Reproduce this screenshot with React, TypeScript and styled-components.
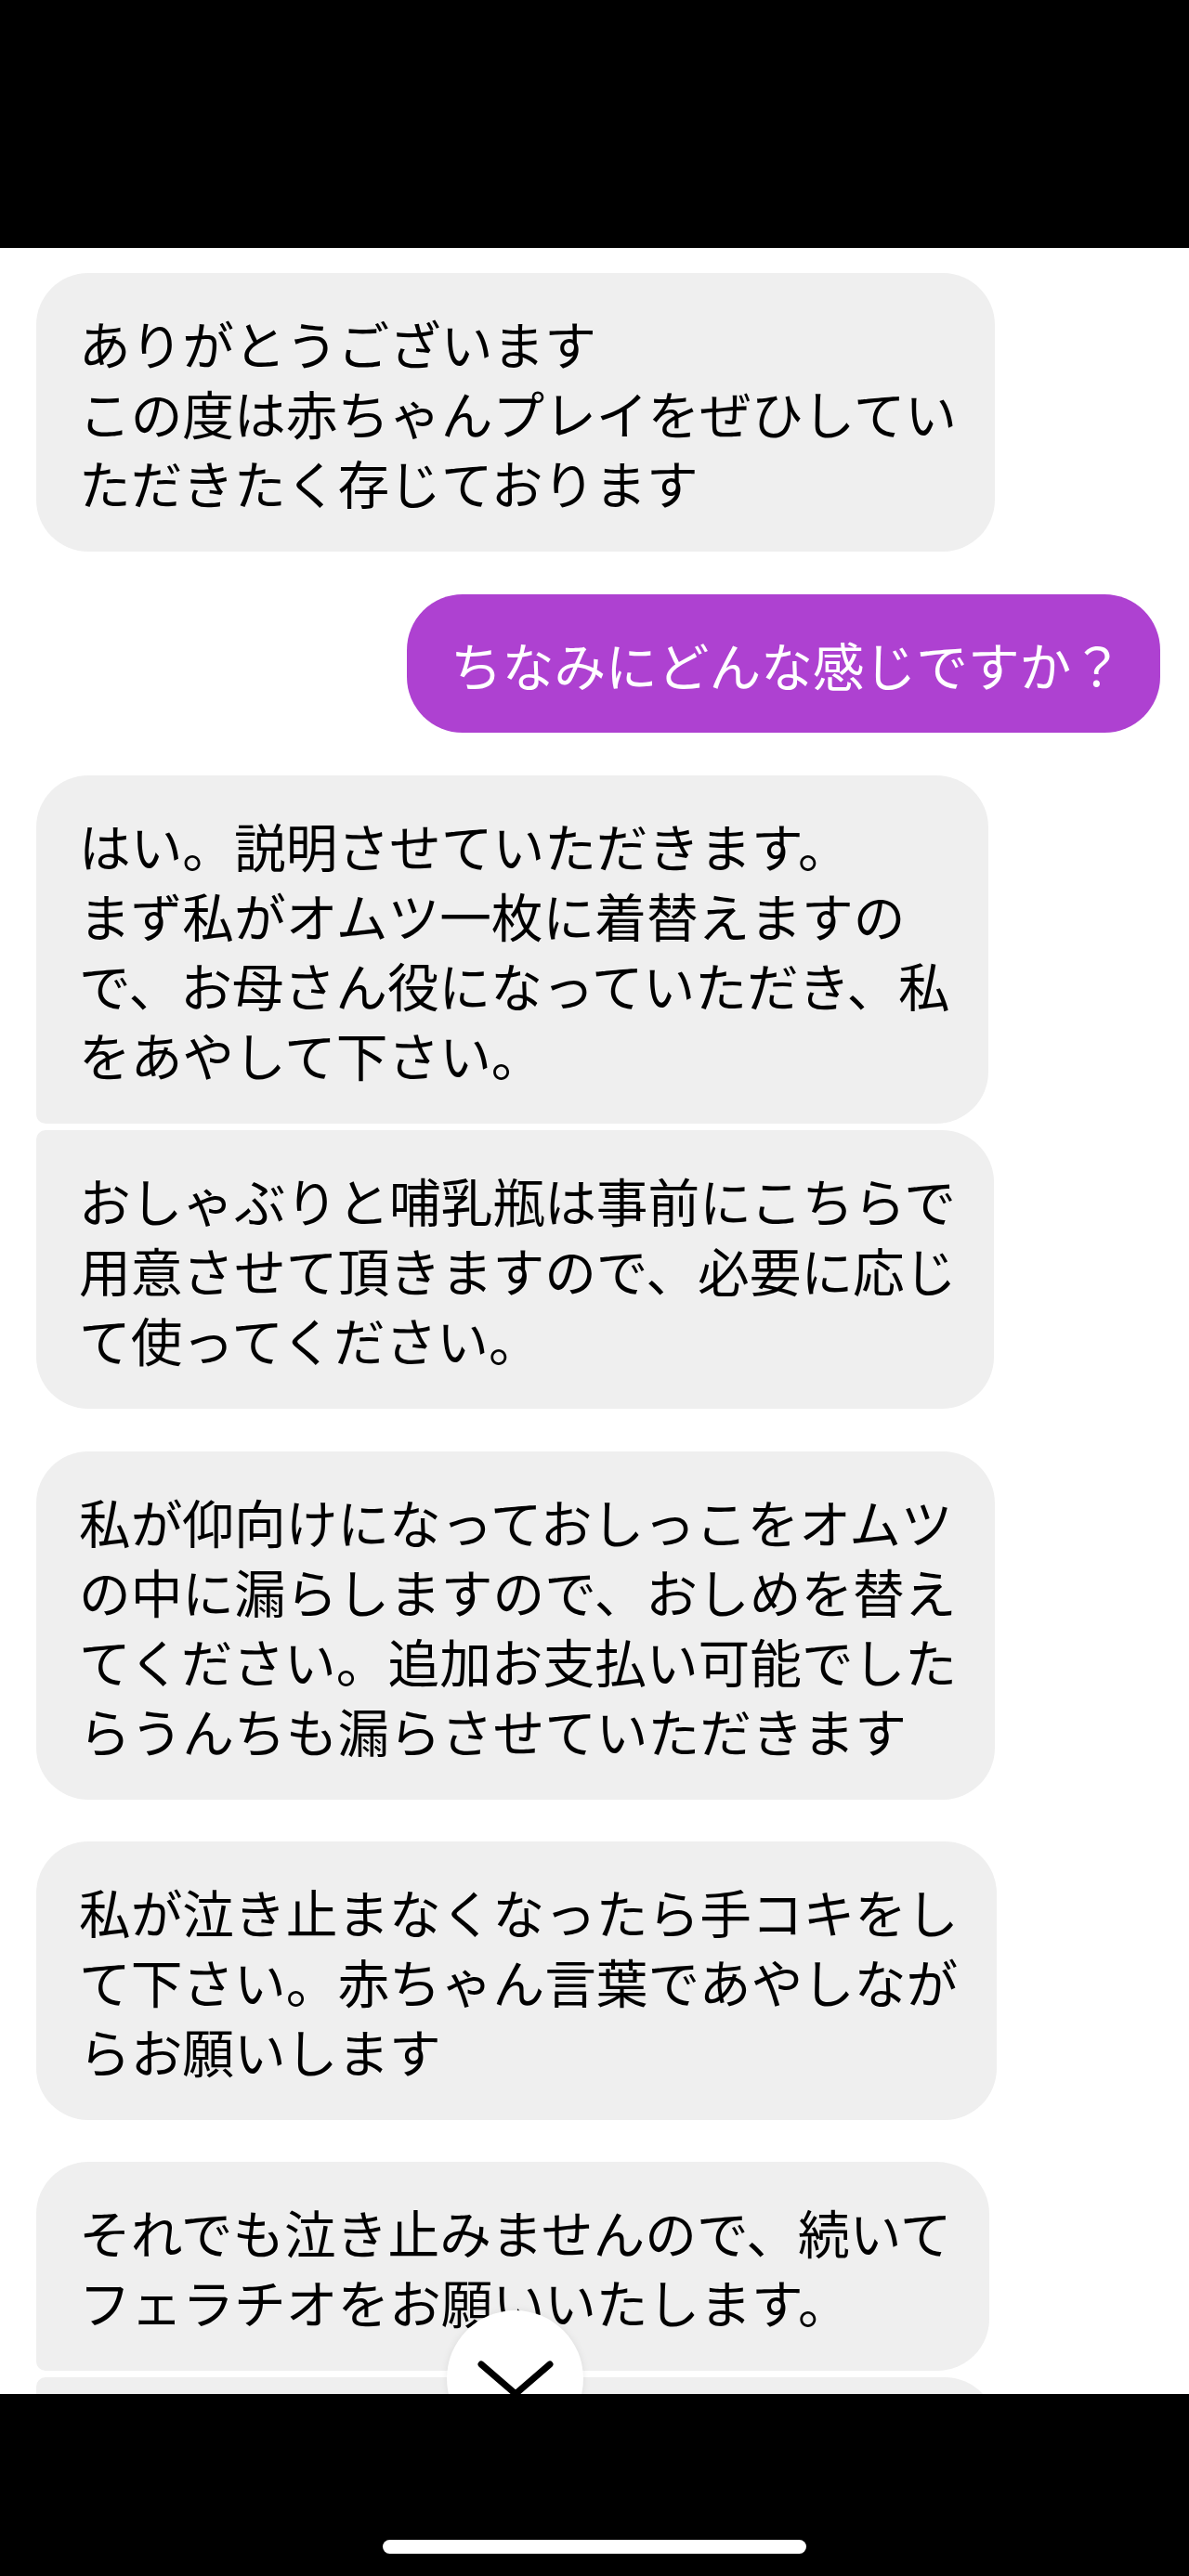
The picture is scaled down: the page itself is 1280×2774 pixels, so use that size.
import React from "react";
import styled, { createGlobalStyle, css } from "styled-components";

const GlobalStyle = createGlobalStyle`
  html, body {
    margin: 0;
    padding: 0;
    background: #ffffff;
  }
  body {
    font-family: "Noto Sans CJK JP", "Noto Sans", sans-serif;
    -webkit-font-smoothing: antialiased;
  }
`;

const Screen = styled.div`
  width: 1280px;
  height: 2774px;
  display: flex;
  flex-direction: column;
  background: #ffffff;
  overflow: hidden;
`;

const TopBar = styled.div`
  height: 267px;
  flex: none;
  background: #000000;
`;

const ChatArea = styled.div`
  position: relative;
  flex: 1;
  overflow: hidden;
  padding: 27px 31px 0 39px;
  display: flex;
  flex-direction: column;
`;

type Pos = "single" | "first" | "last";

const Row = styled.div<{ $mine?: boolean; $gapTop: number }>`
  display: flex;
  justify-content: ${(p) => (p.$mine ? "flex-end" : "flex-start")};
  margin-top: ${(p) => p.$gapTop}px;
  flex: none;
`;

const Bubble = styled.div<{ $mine?: boolean; $pos: Pos }>`
  font-family: "Noto Sans CJK JP", "Noto Sans", sans-serif;
  font-size: 55.7px;
  line-height: 75px;
  font-weight: 400;
  white-space: pre;
  border-radius: 56px;
  padding: 37px 41px 38px 46px;
  background: #efefef;
  color: #000000;
  ${(p) =>
    p.$mine &&
    css`
      background: #ae41d1;
      color: #ffffff;
      padding: 37px 40px 37px 47px;
      border-radius: 60px;
    `}
  ${(p) =>
    p.$pos === "first" &&
    css`
      border-bottom-left-radius: 10px;
    `}
  ${(p) =>
    p.$pos === "last" &&
    css`
      border-top-left-radius: 10px;
    `}
`;

const ScrollButton = styled.div`
  position: absolute;
  left: 481px;
  bottom: -57px;
  width: 147px;
  height: 147px;
  border-radius: 50%;
  background: #ffffff;
  box-shadow: 0 0 8px rgba(0, 0, 0, 0.08);
`;

const ChevronSvg = styled.svg`
  display: block;
`;

const BottomBar = styled.div`
  height: 196px;
  flex: none;
  background: #000000;
  display: flex;
  flex-direction: column;
  justify-content: flex-end;
  align-items: center;
  padding-bottom: 24px;
  box-sizing: border-box;
  position: relative;
  z-index: 2;
`;

const HomeIndicator = styled.div`
  width: 456px;
  height: 15px;
  border-radius: 8px;
  background: #ffffff;
`;

type Msg = { mine?: boolean; pos: Pos; gap: number; lines: string[] };

const messages: Msg[] = [
  {
    pos: "single",
    gap: 0,
    lines: [
      "ありがとうございます",
      "この度は赤ちゃんプレイをぜひしてい",
      "ただきたく存じております",
    ],
  },
  { mine: true, pos: "single", gap: 46, lines: ["ちなみにどんな感じですか？"] },
  {
    pos: "first",
    gap: 46,
    lines: [
      "はい。説明させていただきます。",
      "まず私がオムツ一枚に着替えますの",
      "で、お母さん役になっていただき、私",
      "をあやして下さい。",
    ],
  },
  {
    pos: "last",
    gap: 7,
    lines: [
      "おしゃぶりと哺乳瓶は事前にこちらで",
      "用意させて頂きますので、必要に応じ",
      "て使ってください。",
    ],
  },
  {
    pos: "single",
    gap: 46,
    lines: [
      "私が仰向けになっておしっこをオムツ",
      "の中に漏らしますので、おしめを替え",
      "てください。追加お支払い可能でした",
      "らうんちも漏らさせていただきます",
    ],
  },
  {
    pos: "single",
    gap: 45,
    lines: [
      "私が泣き止まなくなったら手コキをし",
      "て下さい。赤ちゃん言葉であやしなが",
      "らお願いします",
    ],
  },
  {
    pos: "first",
    gap: 45,
    lines: [
      "それでも泣き止みませんので、続いて",
      "フェラチオをお願いいたします。",
    ],
  },
  {
    pos: "last",
    gap: 7,
    lines: [
      "\u3000\u3000\u3000\u3000\u3000\u3000\u3000\u3000\u3000\u3000\u3000\u3000\u3000\u3000\u3000\u3000\u3000",
      "\u3000",
      "\u3000",
    ],
  },
];

export default function App() {
  return (
    <>
      <GlobalStyle />
      <Screen>
        <TopBar />
        <ChatArea>
          {messages.map((m, i) => (
            <Row key={i} $mine={m.mine} $gapTop={m.gap}>
              <Bubble $mine={m.mine} $pos={m.pos}>
                {m.lines.join("\n")}
              </Bubble>
            </Row>
          ))}
          <ScrollButton>
            <ChevronSvg width="147" height="147" viewBox="0 0 147 147">
              <path
                d="M37 58 L74 90 L111 58"
                fill="none"
                stroke="#000000"
                strokeWidth="7"
                strokeLinecap="round"
                strokeLinejoin="round"
              />
            </ChevronSvg>
          </ScrollButton>
        </ChatArea>
        <BottomBar>
          <HomeIndicator />
        </BottomBar>
      </Screen>
    </>
  );
}
